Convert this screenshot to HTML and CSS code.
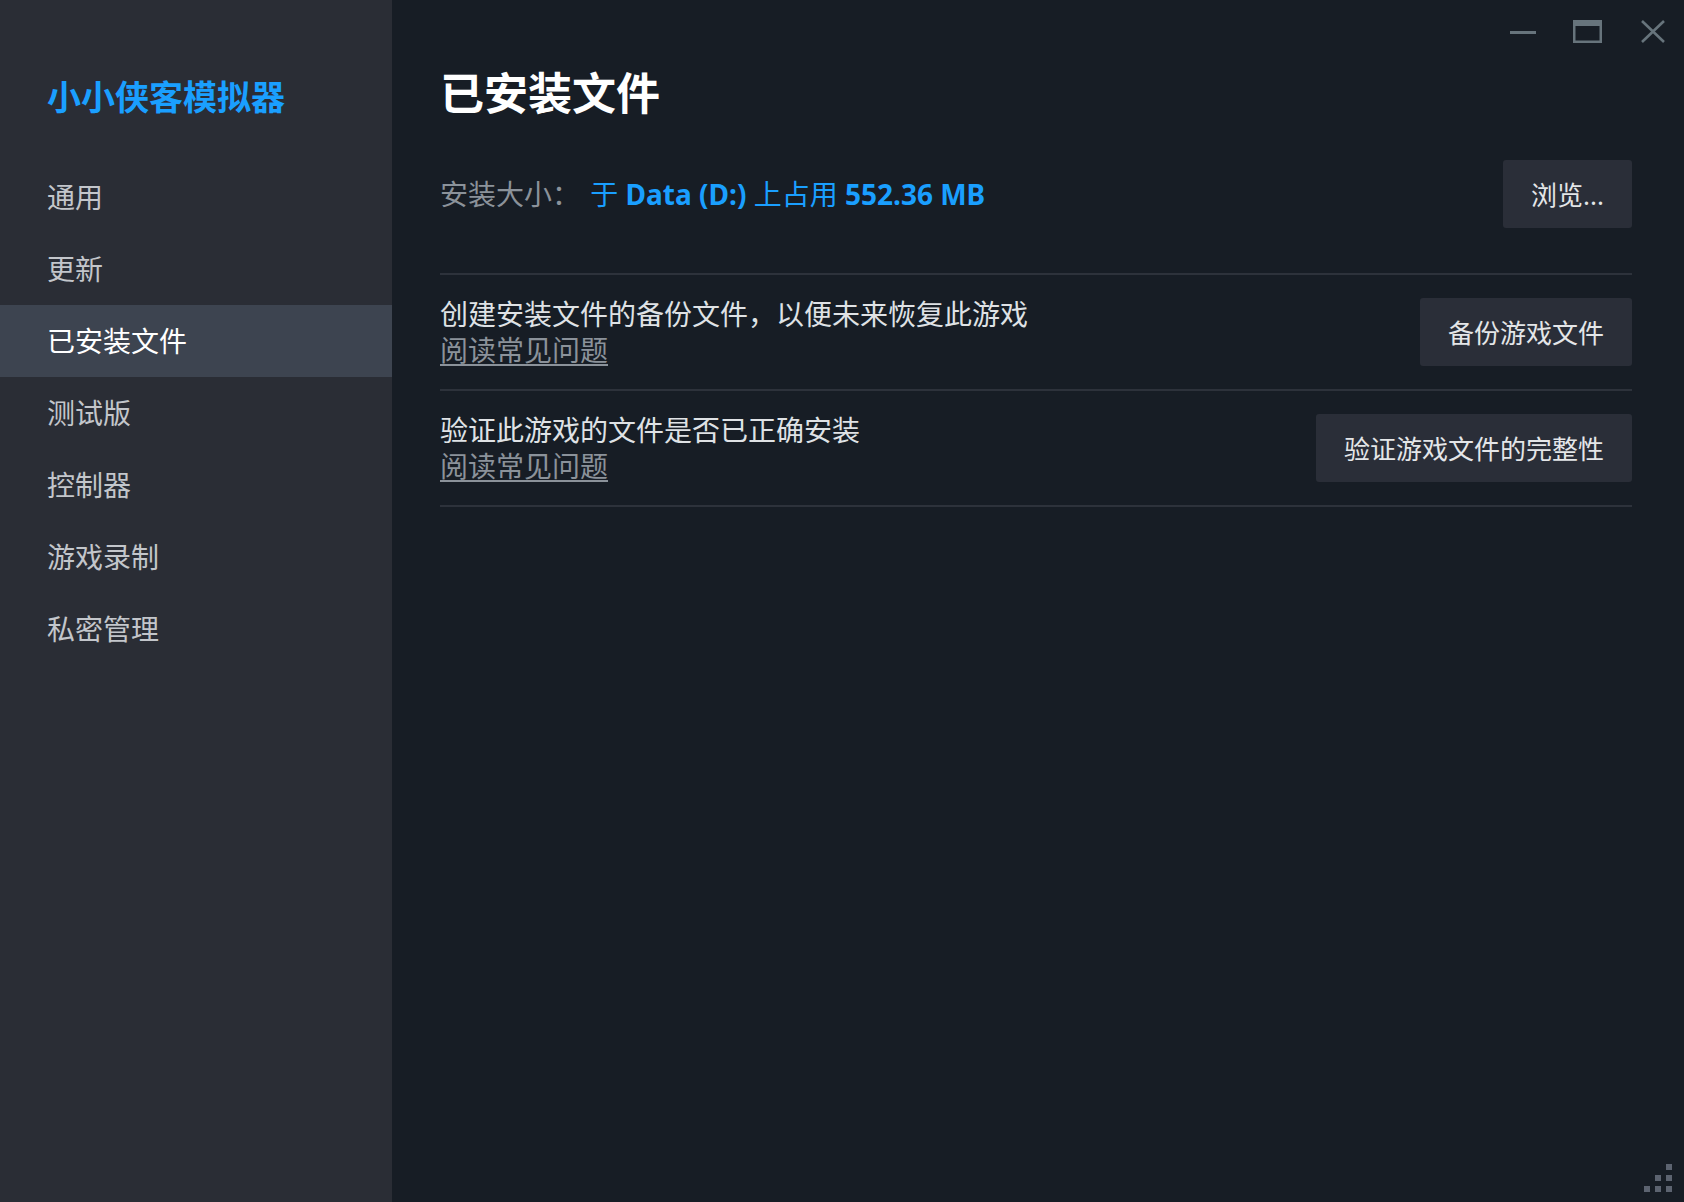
FILE: index.html
```html
<!DOCTYPE html>
<html lang="zh-CN">
<head>
<meta charset="utf-8">
<title>小小侠客模拟器 - 已安装文件</title>
<link rel="stylesheet" href="styles.css">
</head>
<body>
<div class="window">
  <aside class="sidebar">
    <div class="app-title">小小侠客模拟器</div>
    <nav class="nav">
      <div class="nav-item">通用</div>
      <div class="nav-item">更新</div>
      <div class="nav-item active">已安装文件</div>
      <div class="nav-item">测试版</div>
      <div class="nav-item">控制器</div>
      <div class="nav-item">游戏录制</div>
      <div class="nav-item">私密管理</div>
    </nav>
  </aside>
  <main class="main">
    <div class="titlebar">
      <span class="ctrl">
        <svg width="26" height="26" viewBox="0 0 26 26"><rect x="0" y="12" width="26" height="3" fill="#67747c"/></svg>
      </span>
      <span class="ctrl">
        <svg width="29" height="23" viewBox="0 0 29 23"><rect x="1.25" y="1.25" width="26.5" height="20.5" fill="none" stroke="#67747c" stroke-width="2.5"/><rect x="0" y="0" width="29" height="6" fill="#67747c"/></svg>
      </span>
      <span class="ctrl">
        <svg width="24" height="23" viewBox="0 0 24 23"><path d="M1 1 L23 22 M23 1 L1 22" stroke="#67747c" stroke-width="2.6" fill="none"/></svg>
      </span>
    </div>
    <h1 class="heading">已安装文件</h1>
    <div class="size-row">
      <div class="size-info">
        <span class="size-label">安装大小：</span>
        <span class="size-value">于 <b>Data (D:)</b> 上占用 <b>552.36 MB</b></span>
      </div>
      <button class="btn">浏览...</button>
    </div>
    <div class="rows">
      <div class="row">
        <div class="row-text">
          <div class="row-desc">创建安装文件的备份文件，以便未来恢复此游戏</div>
          <a class="row-link">阅读常见问题</a>
        </div>
        <button class="btn">备份游戏文件</button>
      </div>
      <div class="row">
        <div class="row-text">
          <div class="row-desc">验证此游戏的文件是否已正确安装</div>
          <a class="row-link">阅读常见问题</a>
        </div>
        <button class="btn">验证游戏文件的完整性</button>
      </div>
    </div>
  </main>
  <div class="grip">
    <span class="dot d1"></span>
    <span class="dot d2"></span><span class="dot d3"></span>
    <span class="dot d4"></span><span class="dot d5"></span><span class="dot d6"></span>
  </div>
</div>
</body>
</html>
```
FILE: styles.css
```css
* { box-sizing: border-box; }
html, body {
  margin: 0;
  padding: 0;
  width: 1684px;
  height: 1202px;
  overflow: hidden;
  background: #171d25;
  font-family: "Noto Sans", "Noto Sans CJK SC", sans-serif;
}
.window {
  position: relative;
  display: flex;
  width: 1684px;
  height: 1202px;
}
.sidebar {
  width: 392px;
  flex: 0 0 392px;
  background: #2a2d35;
  padding-top: 73px;
}
.app-title {
  padding-left: 47px;
  font-size: 34px;
  line-height: 48px;
  font-weight: 700;
  color: #1a9fff;
}
.nav {
  margin-top: 40px;
  display: flex;
  flex-direction: column;
}
.nav-item {
  height: 72px;
  line-height: 72px;
  padding-left: 47px;
  font-size: 28px;
  color: #c3c6cb;
}
.nav-item.active {
  background: #3d4450;
  color: #ffffff;
}
.main {
  flex: 1;
  padding: 0 52px 0 48px;
  display: flex;
  flex-direction: column;
}
.titlebar {
  height: 64px;
  display: flex;
  justify-content: flex-end;
  align-items: flex-start;
  margin-right: -53px;
  padding-top: 20px;
}
.ctrl {
  display: flex;
  align-items: center;
  justify-content: center;
  width: 65px;
  height: 23px;
}
.ctrl svg { display: block; }
.heading {
  margin: 0;
  font-size: 44px;
  line-height: 58px;
  font-weight: 700;
  color: #ffffff;
}
.size-row {
  margin-top: 38px;
  margin-bottom: 45px;
  display: flex;
  justify-content: space-between;
  align-items: center;
}
.size-info {
  font-size: 28px;
  line-height: 36px;
}
.size-label {
  color: #8b929a;
  margin-right: 3px;
}
.size-value {
  color: #1a9fff;
}
.size-value b { font-weight: 700; }
.btn {
  height: 68px;
  padding: 0 28px;
  border: none;
  border-radius: 3px;
  background: #2a2e38;
  color: #e4e6e8;
  font-family: "Noto Sans", "Noto Sans CJK SC", sans-serif;
  font-size: 26px;
  cursor: pointer;
}
.rows {
  border-top: 2px solid #2d323b;
}
.row {
  display: flex;
  justify-content: space-between;
  align-items: center;
  padding: 21px 0;
  border-bottom: 2px solid #2d323b;
}
.row-text {
  display: flex;
  flex-direction: column;
}
.row-desc {
  font-size: 28px;
  line-height: 36px;
  color: #dfe2e5;
}
.row-link {
  font-size: 28px;
  line-height: 36px;
  color: #8b929a;
  text-decoration: underline;
  text-underline-offset: 3px;
  align-self: flex-start;
}
.grip {
  position: absolute;
  right: 0;
  bottom: 0;
  width: 40px;
  height: 40px;
}
.dot {
  position: absolute;
  width: 6px;
  height: 6px;
  background: #5c6370;
}
.d1 { left: 22px; top: 2px; }
.d2 { left: 11px; top: 13px; }
.d3 { left: 22px; top: 13px; }
.d4 { left: 0px; top: 24px; }
.d5 { left: 11px; top: 24px; }
.d6 { left: 22px; top: 24px; }
```
